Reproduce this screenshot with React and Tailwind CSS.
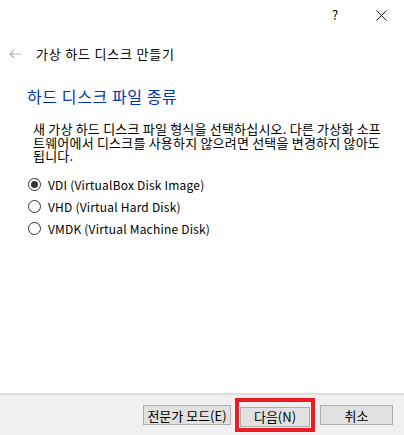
const options = [
  { id: 'vdi', label: 'VDI (VirtualBox Disk Image)', checked: true },
  { id: 'vhd', label: 'VHD (Virtual Hard Disk)', checked: false },
  { id: 'vmdk', label: 'VMDK (Virtual Machine Disk)', checked: false }
];

const font = 'font-["Noto_Sans_CJK_KR","Liberation_Sans",sans-serif]';

function Radio({ checked }) {
  return (
    <span className="flex h-[13px] w-[13px] items-center justify-center rounded-full border border-[#333] bg-white">
      {checked && <span className="h-[7px] w-[7px] rounded-full bg-[#333]" />}
    </span>
  );
}

function Button({ children, className = '' }) {
  return (
    <button className={`h-[20px] border border-[#adadad] bg-[#e1e1e1] text-[13px] leading-none text-black ${className}`}>
      {children}
    </button>
  );
}

export default function App() {
  return (
    <div className={`flex h-[435px] w-[404px] flex-col bg-white ${font} text-black`}>
      <div className="flex h-[30px] items-center justify-end">
        <span className="w-[46px] text-center text-[13px]">?</span>
        <span className="flex w-[46px] justify-center">
          <svg width="11" height="11" viewBox="0 0 11 11">
            <path d="M0.5 0.5 L10.5 10.5 M10.5 0.5 L0.5 10.5" stroke="#111" strokeWidth="1" />
          </svg>
        </span>
      </div>

      <div className="mt-[17px] flex items-center gap-[15px] pl-[9px]">
        <svg width="12" height="10" viewBox="0 0 12 10">
          <path d="M1 5 H12 M5 1 L1 5 L5 9" stroke="#b0b0b0" strokeWidth="1.2" fill="none" />
        </svg>
        <span className="text-[13px] leading-none tracking-[0.8px]">가상 하드 디스크 만들기</span>
      </div>

      <div className="flex-1 pl-[27px]">
        <h1 className="mt-[28px] text-[16px] leading-none tracking-[0.6px] text-[#0033bc]">하드 디스크 파일 종류</h1>

        <p className="mt-[18px] ml-[6px] w-[354px] text-[13px] leading-[13.5px] tracking-[0.2px]">
          새 가상 하드 디스크 파일 형식을 선택하십시오. 다른 가상화 소프트웨어에서 디스크를 사용하지 않으려면 선택을 변경하지 않아도 됩니다.
        </p>

        <div className="mt-[15px] flex flex-col gap-[8px] pl-[1px]">
          {options.map((o) => (
            <label key={o.id} className="flex h-[14px] items-center gap-[7px] text-[12px] leading-[14px] tracking-[0.2px]">
              <Radio checked={o.checked} />
              {o.label}
            </label>
          ))}
        </div>
      </div>

      <div className="flex h-[42px] items-center justify-end gap-[4px] border-t-2 border-[#dcdcdc] bg-[#f0f0f0] pr-[11px]">
        <Button className="w-[88px]">전문가 모드(E)</Button>
        <div className="mr-[1px] border-[4px] border-[#ed1c24] p-[1px]">
          <Button className="w-[70px]">다음(N)</Button>
        </div>
        <Button className="w-[73px]">취소</Button>
      </div>
    </div>
  );
}
